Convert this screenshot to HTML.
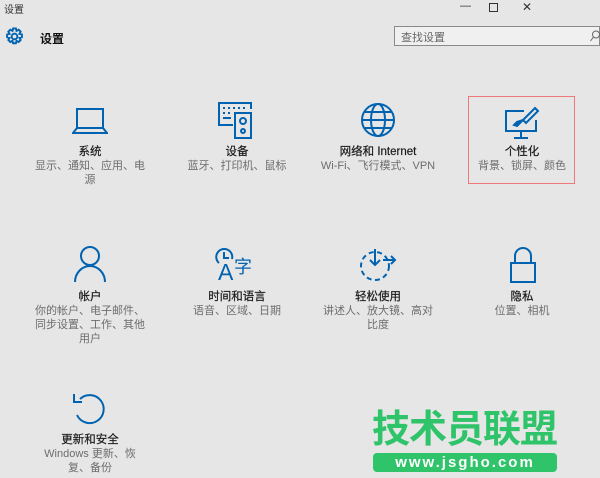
<!DOCTYPE html>
<html><head><meta charset="utf-8"><style>
body{margin:0;width:600px;height:478px;background:#e6e6e6;font-family:"Liberation Sans","Noto Sans CJK SC",sans-serif;position:relative;overflow:hidden}
.a{position:absolute}
.t{position:absolute;width:116px;text-align:center;font-size:11px;color:#6d6d6d;line-height:14px}
.t b{display:block;color:#1a1a1a;font-weight:normal;font-size:11.5px;line-height:15px;margin-bottom:-1px;-webkit-text-stroke:0.2px #1a1a1a}
svg{position:absolute;fill:none;stroke:#0063b1;stroke-width:2}
</style></head><body>
<div class="a" style="left:4px;top:1px;font-size:10px;color:#333">设置</div>
<div class="a" style="left:460px;top:0px;font-size:11px;color:#333">—</div>
<div class="a" style="left:489px;top:3px;width:7px;height:7px;border:1px solid #333"></div>
<div class="a" style="left:522px;top:0px;font-size:12px;color:#333">✕</div>
<svg style="left:5px;top:27px" width="19" height="19" viewBox="0 0 20 20" stroke-width="1.4"><circle cx="10" cy="10" r="3"/><path d="M8.5 1.5h3l.6 2.6 2.3-1.3 2.1 2.1-1.3 2.3 2.6.6v3l-2.6.6 1.3 2.3-2.1 2.1-2.3-1.3-.6 2.6h-3l-.6-2.6-2.3 1.3-2.1-2.1 1.3-2.3-2.6-.6v-3l2.6-.6-1.3-2.3 2.1-2.1 2.3 1.3z"/></svg>
<div class="a" style="left:40px;top:30px;font-size:12px;color:#111;font-weight:bold">设置</div>
<div class="a" style="left:394px;top:26px;width:206px;height:20px;border:1px solid #8a8a8a;background:#f0f0f0;box-sizing:border-box"></div>
<div class="a" style="left:401px;top:29px;font-size:11px;color:#666">查找设置</div>
<svg style="left:590px;top:30px;stroke:#666;stroke-width:1" width="10" height="12" viewBox="0 0 10 12"><circle cx="6" cy="4.5" r="3.5"/><path d="M3.5 7L0.5 11"/></svg>

<!-- row1 -->
<svg style="left:72px;top:108px" width="36" height="26" viewBox="0 0 36 26"><rect x="5" y="1" width="26" height="19"/><path d="M5 20 L1 25 H35 L31 20"/></svg>
<div class="t" style="left:32px;top:145px"><b>系统</b>显示、通知、应用、电<br>源</div>
<svg style="left:217px;top:101px" width="36" height="38" viewBox="0 0 36 38" stroke-width="2"><path d="M16 24H2V2h32v6"/><rect x="18" y="12" width="16" height="25"/><circle cx="26" cy="20" r="3"/><circle cx="26" cy="30" r="2"/><path d="M6 7h2M11 7h2M16 7h2M21 7h2M26 7h2M6 12h2M11 12h2M6 17h8" stroke-width="2"/></svg>
<div class="t" style="left:179px;top:145px"><b>设备</b>蓝牙、打印机、鼠标</div>
<svg style="left:360px;top:102px" width="36" height="36" viewBox="0 0 36 36"><circle cx="18" cy="18" r="16"/><ellipse cx="18" cy="18" rx="7" ry="16"/><path d="M2 18h32M5 10h26M5 26h26"/></svg>
<div class="t" style="left:320px;top:145px;width:116px"><b>网络和 Internet</b>Wi-Fi、飞行模式、VPN</div>
<div class="a" style="left:468px;top:96px;width:107px;height:88px;border:1px solid #f07878;box-sizing:border-box"></div>
<svg style="left:504px;top:106px" width="36" height="34" viewBox="0 0 36 34"><path d="M20 5H2v20h30V14M17 25v6M10 32h14"/><path d="M31 2 l3 3-12 12-3-3z"/><path d="M19 14 l-6 6 -3 -1 3-3z" fill="#0063b1"/></svg>
<div class="t" style="left:464px;top:145px"><b>个性化</b>背景、锁屏、颜色</div>

<!-- row2 -->
<svg style="left:74px;top:245px" width="32" height="38" viewBox="0 0 32 38"><circle cx="16" cy="11" r="9"/><path d="M1 37c0-9 7-16 15-16s15 7 15 16"/></svg>
<div class="t" style="left:32px;top:290px"><b>帐户</b>你的帐户、电子邮件、<br>同步设置、工作、其他<br>用户</div>
<svg style="left:215px;top:248px" width="20" height="20" viewBox="0 0 20 20"><path d="M4 15 A8 8 0 1 1 17 11"/><path d="M9 4v6h5"/></svg>
<div class="a" style="left:218px;top:259px;font-size:23px;color:#0063b1;line-height:26px;font-family:'Liberation Sans',sans-serif">A</div>
<div class="a" style="left:234px;top:255px;font-size:18px;color:#0063b1;line-height:22px;font-family:'Noto Sans CJK SC',sans-serif">字</div>
<div class="t" style="left:179px;top:290px"><b>时间和语言</b>语音、区域、日期</div>
<svg style="left:359px;top:247px" width="40" height="36" viewBox="0 0 40 36"><circle cx="16" cy="19" r="14" stroke-dasharray="5 3.5"/><path d="M16 2v15M11 13l5 5 5-5M24 13h12M32 9l4 4-4 4"/></svg>
<div class="t" style="left:320px;top:290px"><b>轻松使用</b>讲述人、放大镜、高对<br>比度</div>
<svg style="left:509px;top:246px" width="28" height="38" viewBox="0 0 28 38"><rect x="2" y="17" width="24" height="19"/><path d="M6 17V10a8 8 0 0 1 16 0v7"/></svg>
<div class="t" style="left:464px;top:290px"><b>隐私</b>位置、相机</div>

<!-- row3 -->
<svg style="left:72px;top:391px" width="36" height="36" viewBox="0 0 36 36"><path d="M8 8A14 14 0 1 1 5 24"/><path d="M2 3v8h8"/></svg>
<div class="t" style="left:32px;top:433px"><b>更新和安全</b>Windows 更新、恢<br>复、备份</div>

<div class="a" style="left:372px;top:404px;font-size:38px;font-weight:bold;color:#2fc36a;letter-spacing:-1px;font-family:'Noto Sans CJK SC',sans-serif;line-height:44px">技术员联盟</div>
<div class="a" style="left:373px;top:453px;width:184px;height:19px;background:#2fc36a;border-radius:4px;color:#fff;font-size:15px;font-weight:bold;text-align:center;line-height:19px;letter-spacing:2px">www.jsgho.com</div>
</body></html>
